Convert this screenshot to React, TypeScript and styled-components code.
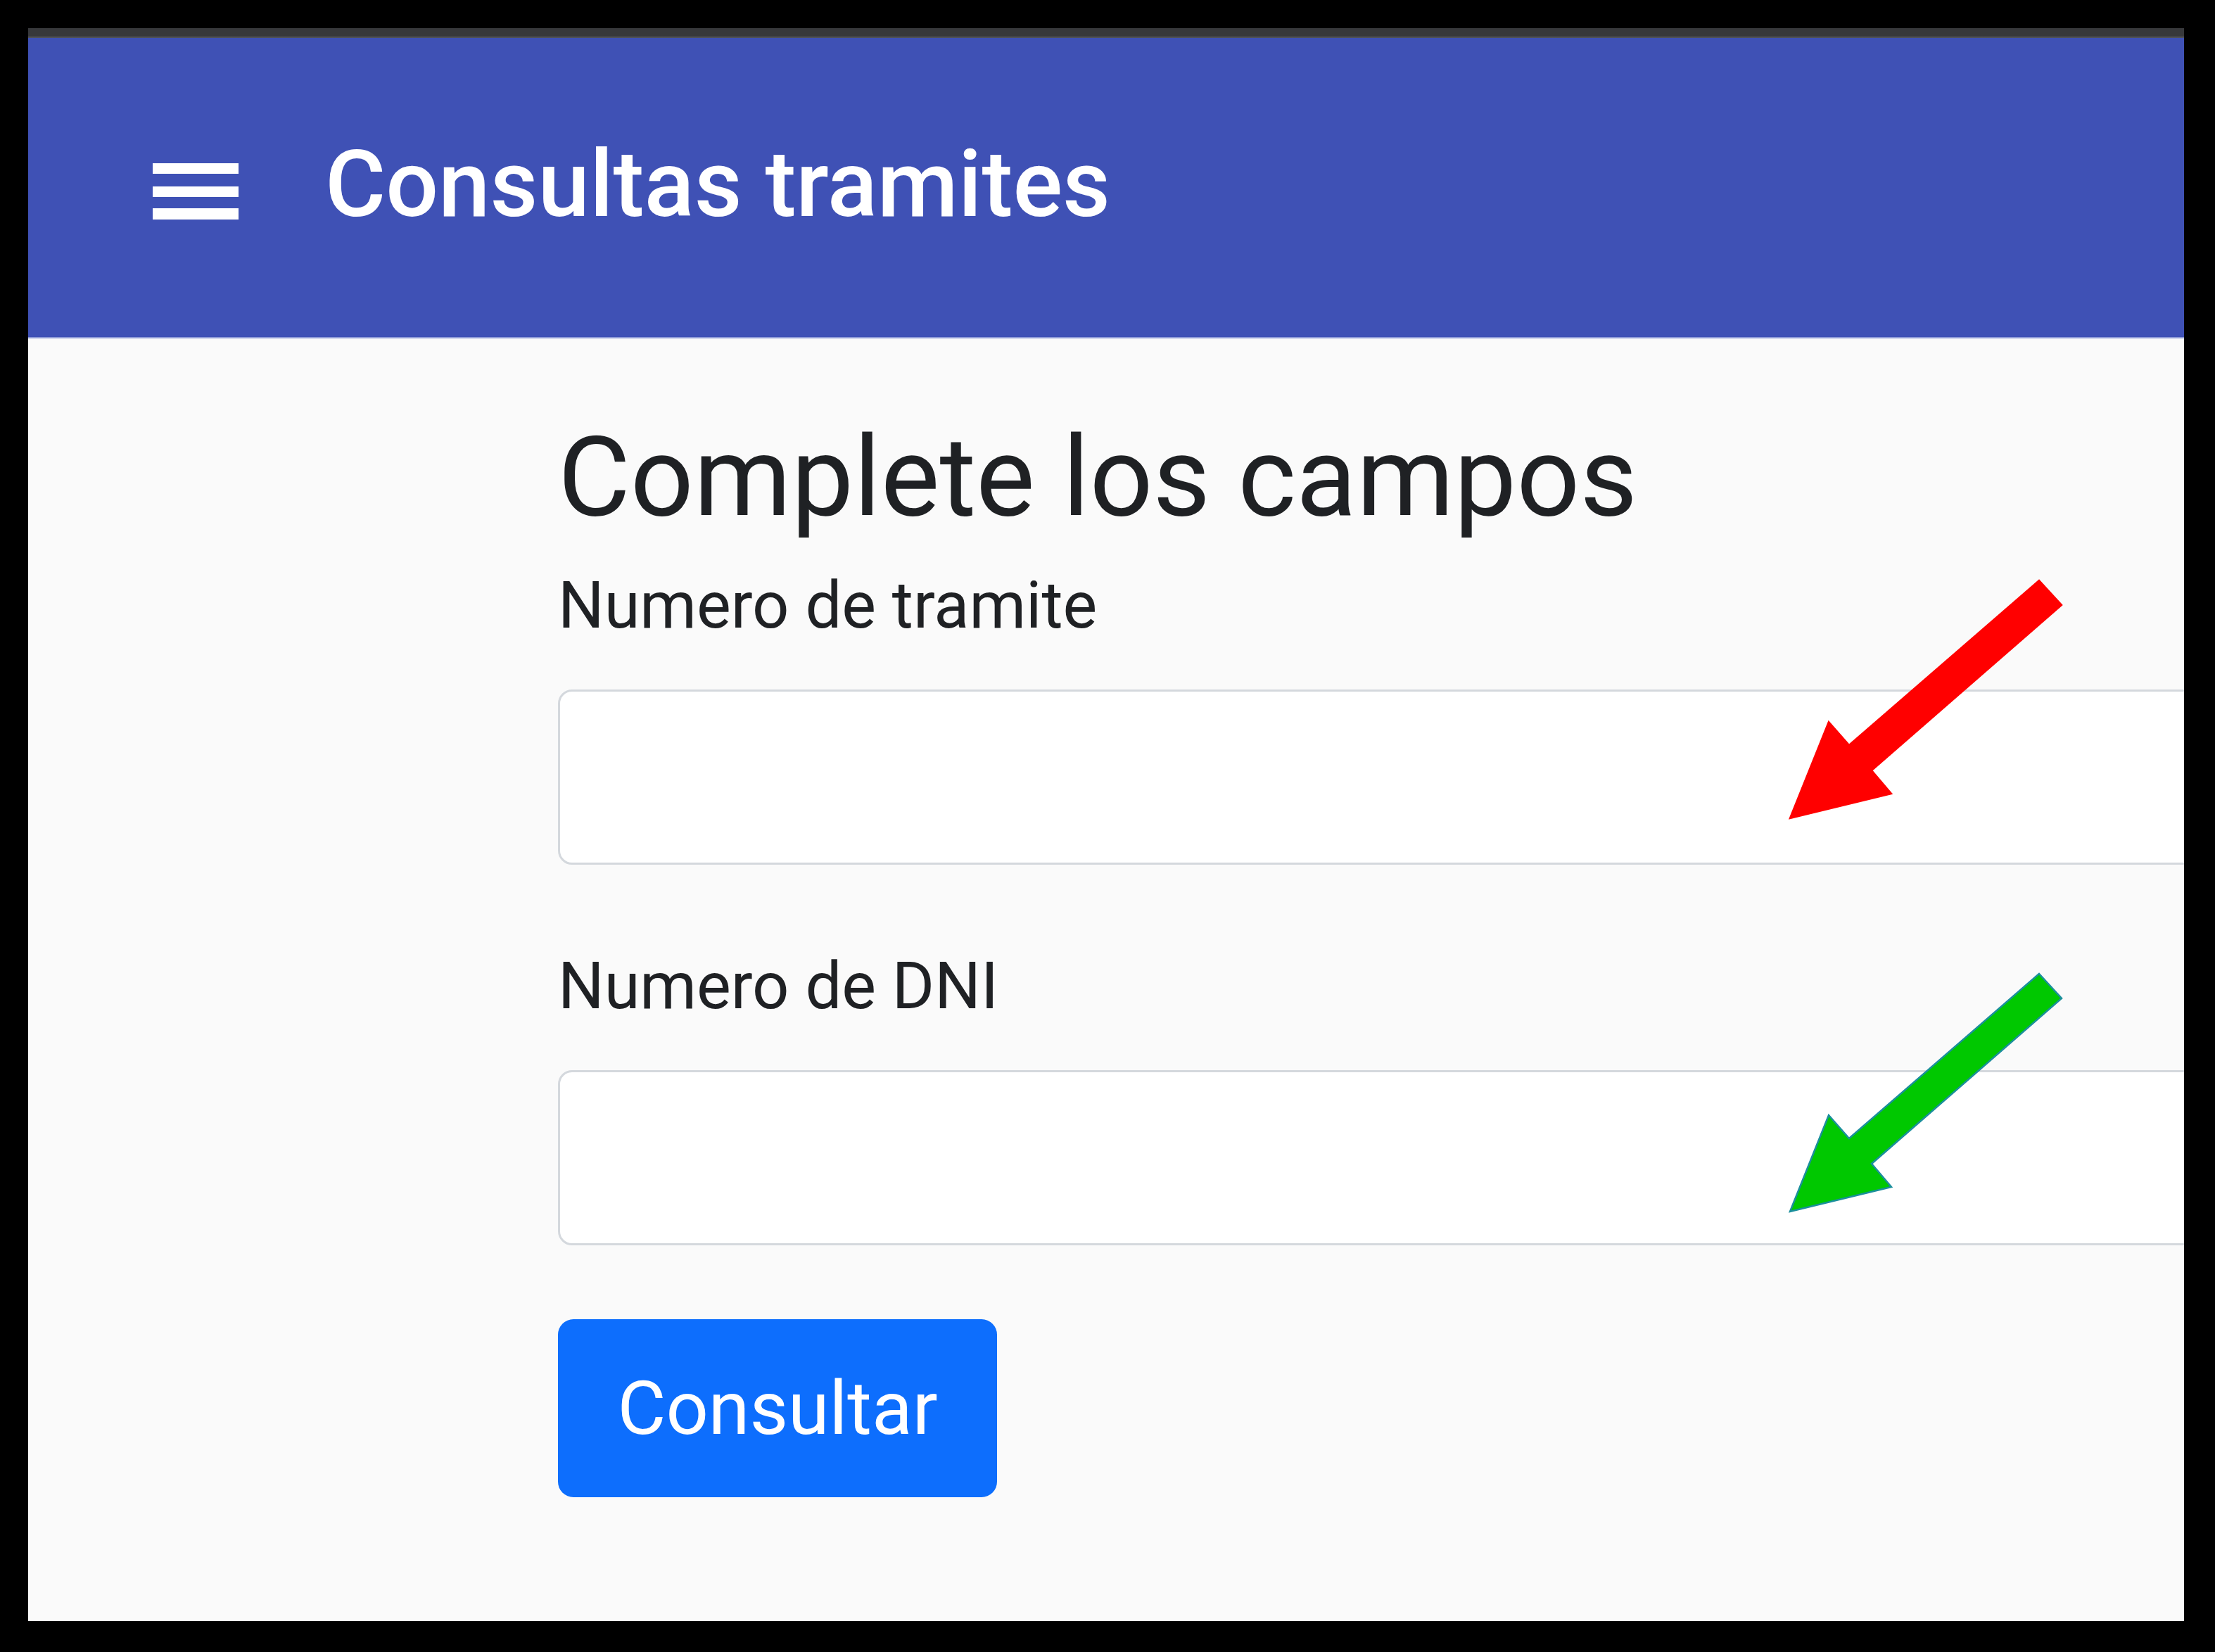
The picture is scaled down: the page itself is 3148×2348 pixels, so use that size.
import styled, { createGlobalStyle } from 'styled-components';

const GlobalStyle = createGlobalStyle`
  html, body {
    margin: 0;
    padding: 0;
    background: #000;
  }
  body {
    font-family: Roboto, "Liberation Sans", Arial, sans-serif;
  }
`;

const Frame = styled.div`
  width: 3148px;
  height: 2348px;
  box-sizing: border-box;
  padding: 40px 44px 44px 40px;
  background: #000;
`;

const Window = styled.div`
  position: relative;
  width: 100%;
  height: 100%;
  overflow: hidden;
  background: #fafafa;
  display: flex;
  flex-direction: column;
`;

const TopStrip = styled.div`
  height: 14px;
  flex-shrink: 0;
  background: linear-gradient(#37383b 0 75%, #55585f);
`;

const AppBar = styled.header`
  height: 425px;
  flex-shrink: 0;
  background: #3f51b5;
  display: flex;
  align-items: center;
  gap: 123px;
  padding-left: 177px;
  box-shadow: 0 2px 0 #8f9bd6;
`;

const MenuIcon = styled.svg`
  width: 122px;
  height: 80px;
  margin-top: 11px;
  flex-shrink: 0;
`;

const AppTitle = styled.h6`
  margin: 0 0 9px;
  font-size: 132px;
  font-weight: 500;
  line-height: 1;
  color: #fff;
  white-space: nowrap;
`;

const Main = styled.main`
  padding: 104px 0 0 753px;
`;

const Form = styled.form`
  width: 2400px;
  display: flex;
  flex-direction: column;
  align-items: flex-start;
`;

const Heading = styled.h1`
  margin: 0;
  font-size: 158px;
  font-weight: 400;
  line-height: 190px;
  color: #1f2124;
  white-space: nowrap;
`;

const Field = styled.div<{ $first?: boolean }>`
  width: 100%;
  margin-top: ${(p) => (p.$first ? '17px' : '102px')};
`;

const Label = styled.label`
  display: block;
  font-size: 92px;
  line-height: 141px;
  color: #1f2124;
  margin-bottom: 49px;
`;

const Input = styled.input`
  display: block;
  width: 100%;
  height: 249px;
  box-sizing: border-box;
  border: 3px solid #d4d8dd;
  border-radius: 20px;
  background: #fff;
  outline: none;
`;

const SubmitButton = styled.button`
  margin-top: 105px;
  width: 624px;
  height: 253px;
  border: none;
  border-radius: 22px;
  background: #0d6efd;
  color: #fff;
  font-family: Roboto, "Liberation Sans", Arial, sans-serif;
  font-size: 106px;
  cursor: pointer;
`;

const ArrowSvg = styled.svg<{ $top: number }>`
  position: absolute;
  left: 2504px;
  top: ${(p) => p.$top}px;
  width: 390px;
  height: 342px;
  overflow: visible;
  pointer-events: none;
`;

const ARROW_POINTS = '354,0 386,35 116,270 144,303 0,338 55,201 84,234';

const Arrow = ({ top, fill, stroke }: { top: number; fill: string; stroke: string }) => (
  <ArrowSvg $top={top} viewBox="0 0 390 342">
    <polygon points={ARROW_POINTS} fill={fill} stroke={stroke} strokeWidth={2.5} strokeLinejoin="miter" />
  </ArrowSvg>
);

export default function App() {
  return (
    <Frame>
      <GlobalStyle />
      <Window>
        <TopStrip />
        <AppBar>
          <MenuIcon viewBox="0 0 122 80">
            <rect x="0" y="0" width="122" height="15" fill="#fff" />
            <rect x="0" y="33" width="122" height="15" fill="#fff" />
            <rect x="0" y="64" width="122" height="16" fill="#fff" />
          </MenuIcon>
          <AppTitle>Consultas tramites</AppTitle>
        </AppBar>

        <Main>
          <Form onSubmit={(e) => e.preventDefault()}>
            <Heading>Complete los campos</Heading>

            <Field $first>
              <Label htmlFor="tramite">Numero de tramite</Label>
              <Input id="tramite" type="text" />
            </Field>

            <Field>
              <Label htmlFor="dni">Numero de DNI</Label>
              <Input id="dni" type="text" />
            </Field>

            <SubmitButton type="submit">Consultar</SubmitButton>
          </Form>
        </Main>

        <Arrow top={785} fill="#ff0000" stroke="#ff0000" />
        <Arrow top={1344} fill="#00c800" stroke="#1b8f9c" />
      </Window>
    </Frame>
  );
}
